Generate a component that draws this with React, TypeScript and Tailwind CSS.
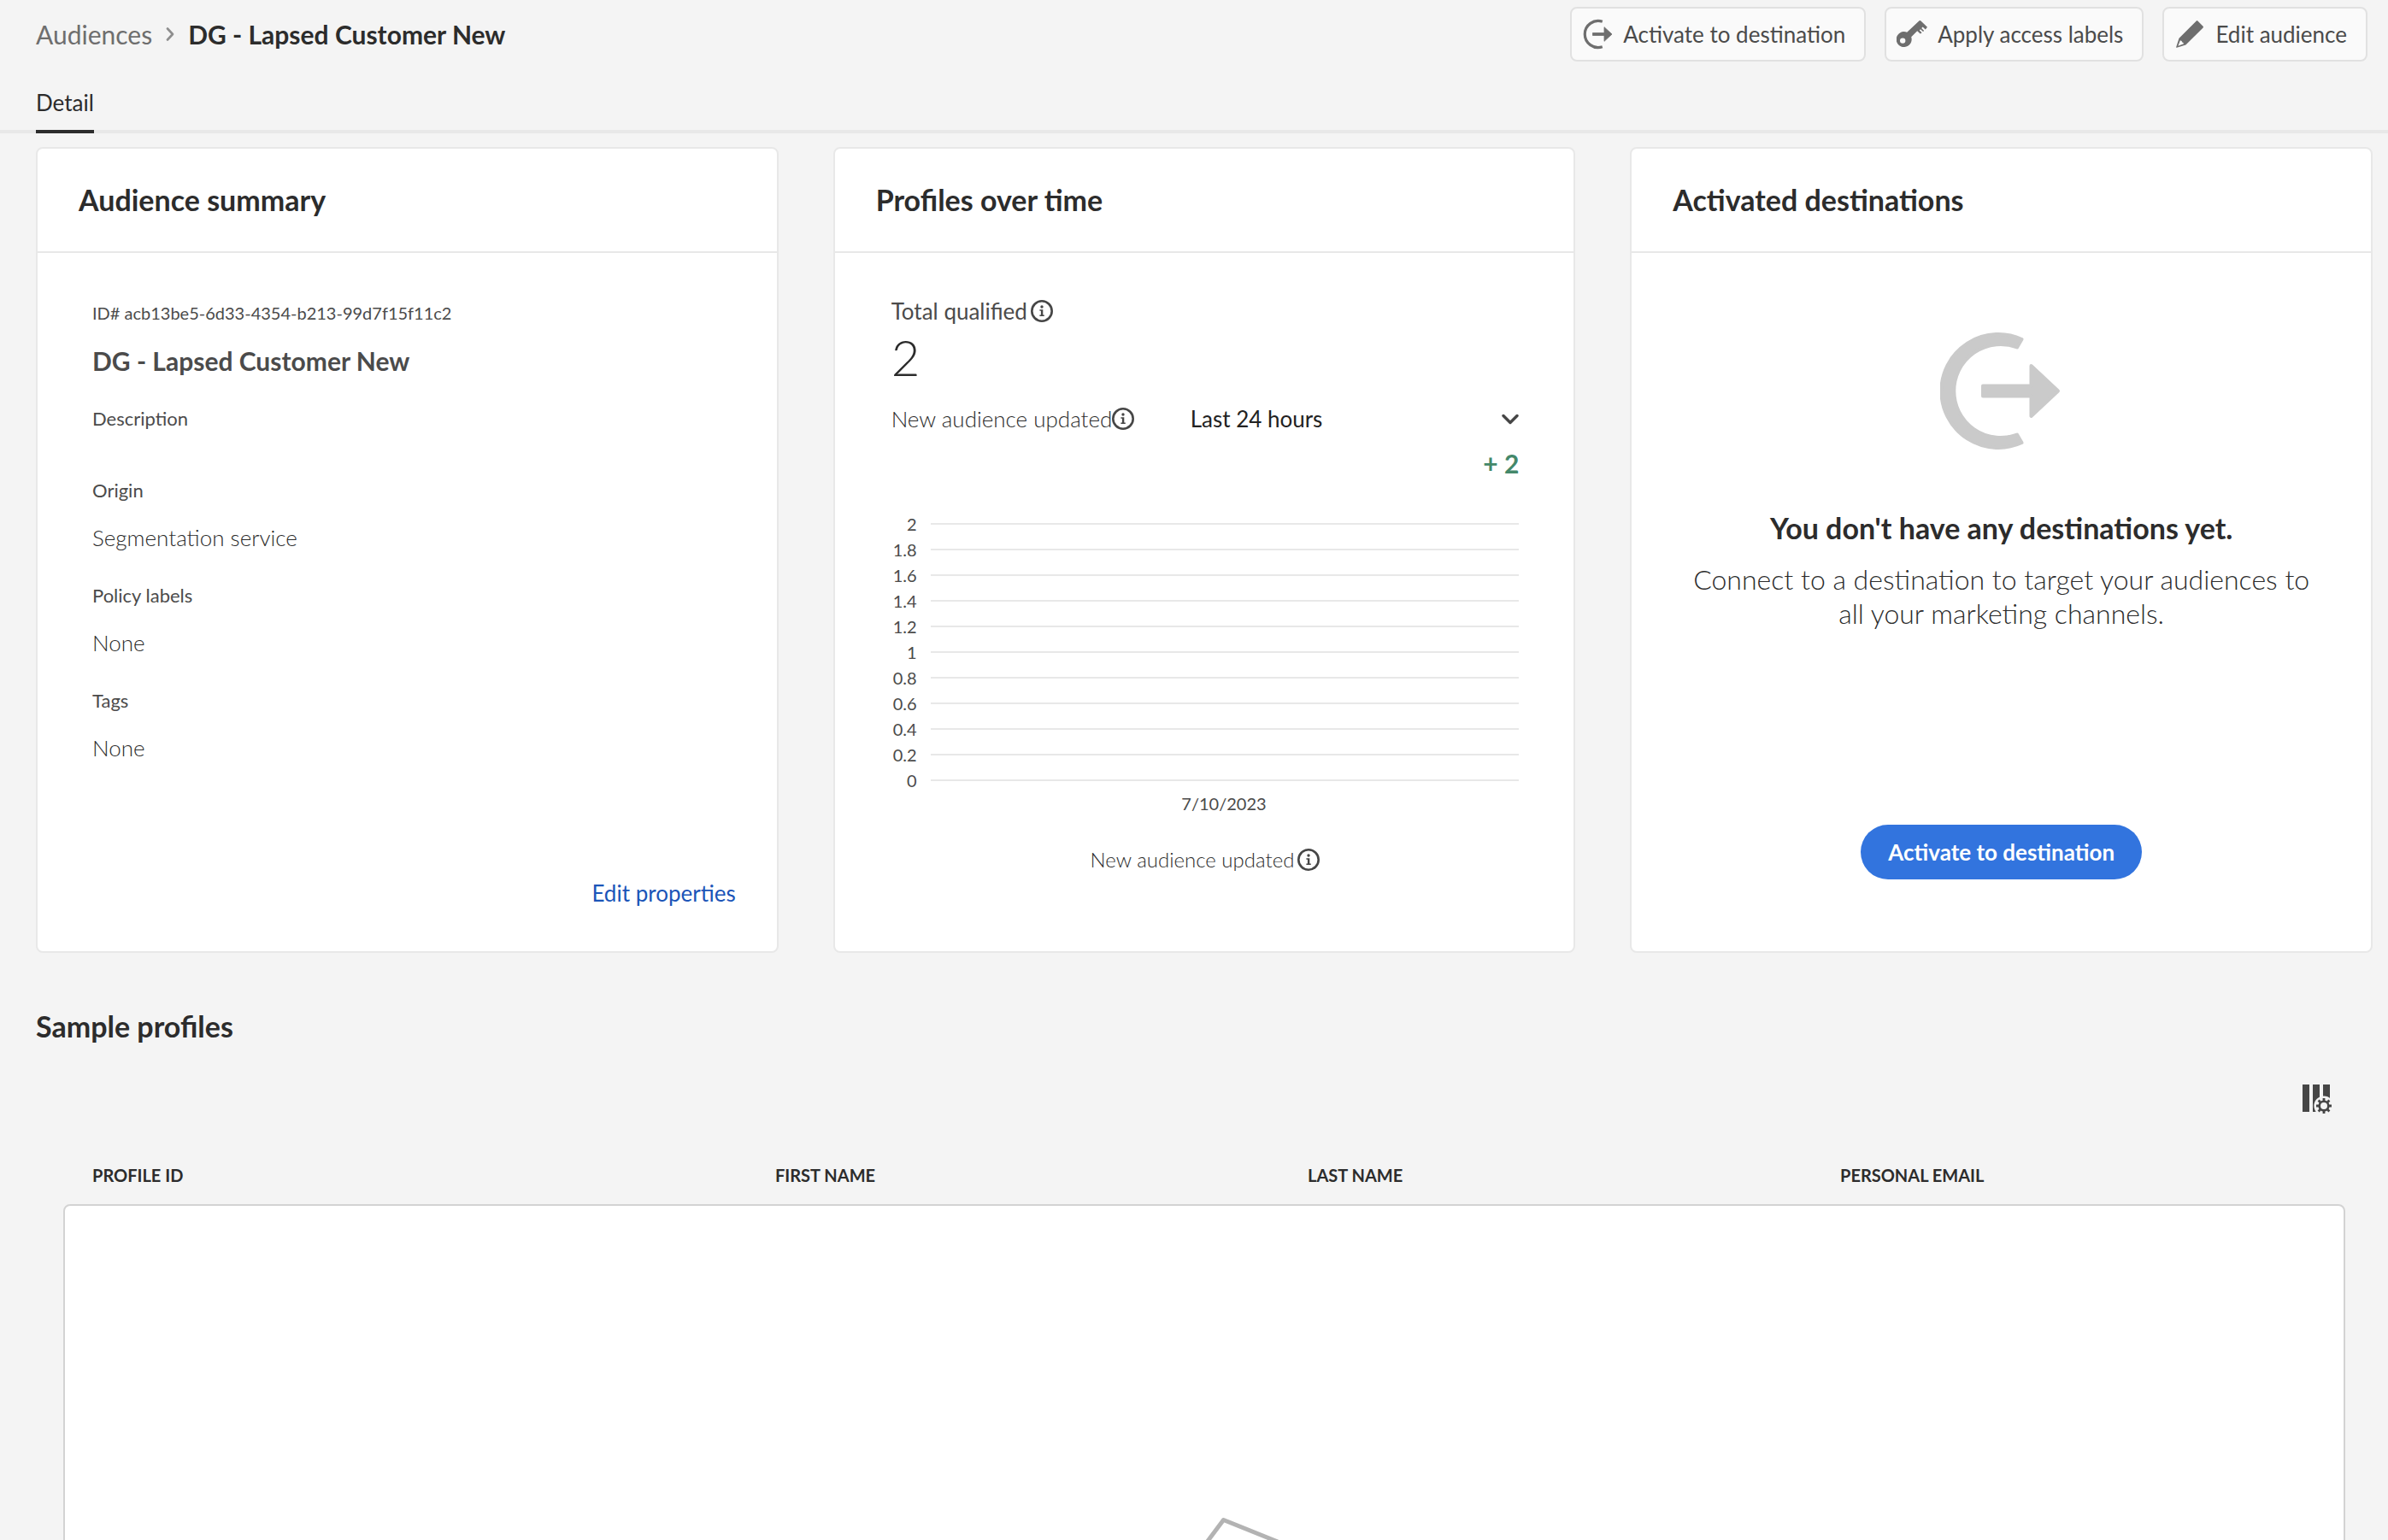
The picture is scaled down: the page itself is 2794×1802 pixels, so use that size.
import React from 'react';

const ticks = ['2', '1.8', '1.6', '1.4', '1.2', '1', '0.8', '0.6', '0.4', '0.2', '0'];

const properties = [
  { label: 'Origin', value: 'Segmentation service' },
  { label: 'Policy labels', value: 'None' },
  { label: 'Tags', value: 'None' },
];

function ActivateIcon() {
  return (
    <svg className="h-9 w-9 shrink-0" viewBox="0 0 36 36" fill="none" aria-hidden="true">
      <path d="M23.8 3.2A15.6 15.6 0 1 0 23.8 32.8" stroke="currentColor" strokeWidth="3.2" />
      <path d="M12.5 16.5H26V9.7L35 18L26 26.3V19.5H12.5Z" fill="currentColor" stroke="currentColor" strokeLinejoin="round" strokeWidth="0.8" />
    </svg>
  );
}

function KeyIcon() {
  return (
    <svg className="h-9 w-9 shrink-0" viewBox="0 -2 36 36" fill="currentColor" aria-hidden="true">
      <path
        fillRule="evenodd"
        d="M28.2 0.3L36 7.8L33.8 10.4L30.6 7.5L29.2 8.9L32.2 11.9L31 13L28 10.2L26.8 11.4L29.6 14.3L27.8 15.4L24.2 12.2L17.2 19.2A9 9 0 1 1 12.2 13.8L26.6 0.3Q27.4 -0.4 28.2 0.3ZM7.2 20.4A3.2 3.2 0 1 0 7.2 26.8A3.2 3.2 0 1 0 7.2 20.4Z"
      />
    </svg>
  );
}

function PencilIcon() {
  return (
    <svg className="h-9 w-9 shrink-0" viewBox="-2 -2 36 36" fill="currentColor" aria-hidden="true">
      <path
        fillRule="evenodd"
        d="M23.8 0.5Q24.6 -0.3 25.4 0.5L31.6 6.8Q32.4 7.6 31.6 8.4L11.4 28.6L0.9 31.8Q-0.2 32 0.2 31L3.5 20.8ZM4.9 23.2L2.4 29.8L9 27.3Q8.8 25.6 7.3 25.6Q7 23.4 4.9 23.2Z"
      />
    </svg>
  );
}

function InfoIcon() {
  return (
    <svg className="h-[26px] w-[26px] shrink-0 text-[#464646]" viewBox="0 0 26 26" fill="none" aria-hidden="true">
      <circle cx="13" cy="13" r="11.7" stroke="currentColor" strokeWidth="2.6" />
      <circle cx="13" cy="8" r="1.7" fill="currentColor" />
      <path d="M10.4 11.2H14.3V17.4H15.8V19H10.4V17.4H11.9V12.8H10.4Z" fill="currentColor" />
    </svg>
  );
}

function EmptyDestinationIcon() {
  return (
    <svg className="h-[137px] w-36" viewBox="0 0 144 137" fill="currentColor" stroke="currentColor" strokeWidth="4" strokeLinejoin="round" aria-hidden="true">
      <path d="M95.5 8A66.5 66.5 0 1 0 95.5 129L90 119.5A54.5 54.5 0 1 1 90 17.5Z" />
      <path d="M50 62.5H106.5V39L138 68.5L106.5 98V74.5H50Z" />
    </svg>
  );
}

function ColumnSettingsIcon() {
  return (
    <svg className="h-[34px] w-[34px]" viewBox="0 0 34 34" aria-hidden="true">
      <path d="M0 0H8V32H0ZM12 0H20V32H12ZM24 0H32V16H24Z" fill="#464646" />
      <circle cx="25" cy="25" r="11.6" fill="#f4f4f4" />
      <circle cx="25" cy="25" r="5.3" fill="none" stroke="#464646" strokeWidth="2.6" />
      <path
        d="M25 16V19M25 31V34M16 25H19M31 25H34M18.6 18.6L20.8 20.8M29.2 29.2L31.4 31.4M31.4 18.6L29.2 20.8M20.8 29.2L18.6 31.4"
        stroke="#464646"
        strokeWidth="2.8"
      />
    </svg>
  );
}

function ToolbarButton({ icon, children }: { icon: React.ReactNode; children: React.ReactNode }) {
  return (
    <button type="button" className="flex h-16 items-center gap-3 rounded-lg border-2 border-[#e1e1e1] bg-[#fafafa] pr-[22px] pl-3 text-[26px] leading-8 text-[#4b4b4b]">
      <span className="text-[#6e6e6e]">{icon}</span>
      {children}
    </button>
  );
}

function Card({ title, children }: { title: string; children: React.ReactNode }) {
  return (
    <section className="flex flex-col rounded-lg border-2 border-[#e8e8e8] bg-white">
      <header className="border-b-2 border-[#e8e8e8] px-12 py-10">
        <h2 className="text-[34px] leading-10 font-bold text-[#2c2c2c]">{title}</h2>
      </header>
      {children}
    </section>
  );
}

export default function App() {
  return (
    <div className="h-screen overflow-hidden bg-[#f4f4f4] font-['Lato',sans-serif] text-[#4b4b4b]">
      <header className="flex items-center justify-between pt-2 pr-6 pl-[42px]">
        <nav aria-label="Breadcrumb" className="flex items-center text-[30px] leading-10">
          <a href="#audiences" className="text-[#6e6e6e]">Audiences</a>
          <svg className="mx-4 h-4 w-[10px]" viewBox="0 0 10 16" fill="none" stroke="#8e8e8e" strokeWidth="2.6" strokeLinecap="round" strokeLinejoin="round" aria-hidden="true">
            <path d="M2 1.5L8 8L2 14.5" />
          </svg>
          <h1 className="font-bold text-[#2c2c2c]">DG - Lapsed Customer New</h1>
        </nav>
        <div className="flex gap-[22px]">
          <ToolbarButton icon={<ActivateIcon />}>Activate to destination</ToolbarButton>
          <ToolbarButton icon={<KeyIcon />}>Apply access labels</ToolbarButton>
          <ToolbarButton icon={<PencilIcon />}>Edit audience</ToolbarButton>
        </div>
      </header>

      <div role="tablist" className="mt-8 flex border-b-4 border-[#e8e8e8] pl-[42px]">
        <button type="button" role="tab" aria-selected="true" className="-mb-1 border-b-4 border-[#2c2c2c] pb-4 text-[26px] leading-8 text-[#2c2c2c]">
          Detail
        </button>
      </div>

      <main className="pt-4">
        <div className="grid grid-cols-3 gap-16 pr-[18px] pl-[42px]">
          <Card title="Audience summary">
            <div className="flex flex-1 flex-col pt-[54px] pr-12 pb-13 pl-16">
              <p className="text-[20px] leading-8">ID# acb13be5-6d33-4354-b213-99d7f15f11c2</p>
              <h3 className="mt-5 text-[30px] leading-10 font-bold">DG - Lapsed Customer New</h3>
              <h4 className="mt-8 text-[22px] leading-8">Description</h4>
              <dl className="mt-13 flex flex-col gap-9">
                {properties.map((p) => (
                  <div key={p.label} className="flex flex-col gap-[23px]">
                    <dt className="text-[22px] leading-8">{p.label}</dt>
                    <dd className="text-[26px] leading-8 font-light text-[#2c2c2c]">{p.value}</dd>
                  </div>
                ))}
              </dl>
              <a href="#edit" className="mt-[138px] self-end text-[26px] leading-8 text-[#1b55b8]">Edit properties</a>
            </div>
          </Card>

          <Card title="Profiles over time">
            <div className="flex flex-col pt-13 pr-16 pl-[66px]">
              <p className="flex items-center gap-1 text-[26px] leading-8">
                Total qualified
                <InfoIcon />
              </p>
              <p className="mt-1.5 text-[58px] leading-16 font-light text-[#2c2c2c]">2</p>
              <div className="mt-6 flex items-center">
                <label htmlFor="range" className="flex w-[350px] items-center text-[26px] leading-8 font-light text-[#2c2c2c]">
                  New audience updated
                  <InfoIcon />
                </label>
                <div className="relative flex-1">
                  <select id="range" defaultValue="24h" className="w-full appearance-none bg-transparent text-[26px] leading-8 text-[#222222]">
                    <option value="24h">Last 24 hours</option>
                  </select>
                  <svg className="pointer-events-none absolute top-2.5 right-0 h-[14px] w-5" viewBox="0 0 20 14" fill="none" stroke="#464646" strokeWidth="3.4" strokeLinecap="round" strokeLinejoin="round" aria-hidden="true">
                    <path d="M2 2.5L10 10.5L18 2.5" />
                  </svg>
                </div>
              </div>
              <p className="mt-5 text-right text-[30px] leading-8 font-bold text-[#44886a]">+ 2</p>
              <div className="mt-10">
                {ticks.map((t) => (
                  <div key={t} className="flex h-[30px] items-center gap-4">
                    <span className="w-[30px] text-right text-[20px] leading-6">{t}</span>
                    <span className="h-0.5 flex-1 bg-[#e8e8e8]" />
                  </div>
                ))}
                <p className="pl-11 text-center text-[20px] leading-6">7/10/2023</p>
              </div>
              <p className="mt-[38px] flex items-center justify-center gap-1 text-[24px] leading-8 font-light text-[#2c2c2c]">
                New audience updated
                <InfoIcon />
              </p>
            </div>
          </Card>

          <Card title="Activated destinations">
            <div className="flex flex-1 flex-col items-center px-16 pt-[93px] pb-[84px] text-center">
              <span className="text-[#cacaca]">
                <EmptyDestinationIcon />
              </span>
              <h3 className="mt-[72px] text-[34px] leading-10 font-bold text-[#2c2c2c]">You don't have any destinations yet.</h3>
              <p className="mt-5 text-[32px] leading-10 font-light text-[#2c2c2c]">Connect to a destination to target your audiences to all your marketing channels.</p>
              <button type="button" className="mt-auto h-16 rounded-full bg-[#3274de] px-8 text-[26px] leading-8 font-bold text-white">
                Activate to destination
              </button>
            </div>
          </Card>
        </div>

        <h2 className="mt-[66px] pl-[42px] text-[34px] leading-10 font-bold text-[#2c2c2c]">Sample profiles</h2>
        <div className="flex justify-end pt-12 pr-[66px]">
          <button type="button" aria-label="Column settings">
            <ColumnSettingsIcon />
          </button>
        </div>

        <div className="pr-[50px] pl-[74px]">
          <table className="mt-14 w-full table-fixed text-left">
            <thead className="text-[20px] leading-8 text-[#2c2c2c]">
              <tr>
                <th scope="col" className="w-[30%] pb-[18px] pl-[34px] font-bold">PROFILE ID</th>
                <th scope="col" className="pb-[18px] pl-8 font-bold">FIRST NAME</th>
                <th scope="col" className="pb-[18px] pl-8 font-bold">LAST NAME</th>
                <th scope="col" className="pb-[18px] pl-8 font-bold">PERSONAL EMAIL</th>
              </tr>
            </thead>
            <tbody>
              <tr>
                <td colSpan={4} className="p-0">
                  <div className="flex justify-center rounded-lg border-2 border-[#d3d3d3] bg-white py-[364px]">
                    <svg className="h-[150px] w-[180px]" viewBox="0 0 180 150" fill="none" stroke="#b3b3b3" strokeWidth="5" strokeLinejoin="round" aria-label="No profiles" role="img">
                      <path d="M112.5 3.5L176 29L130 146L30 114Z" />
                    </svg>
                  </div>
                </td>
              </tr>
            </tbody>
          </table>
        </div>
      </main>
    </div>
  );
}
